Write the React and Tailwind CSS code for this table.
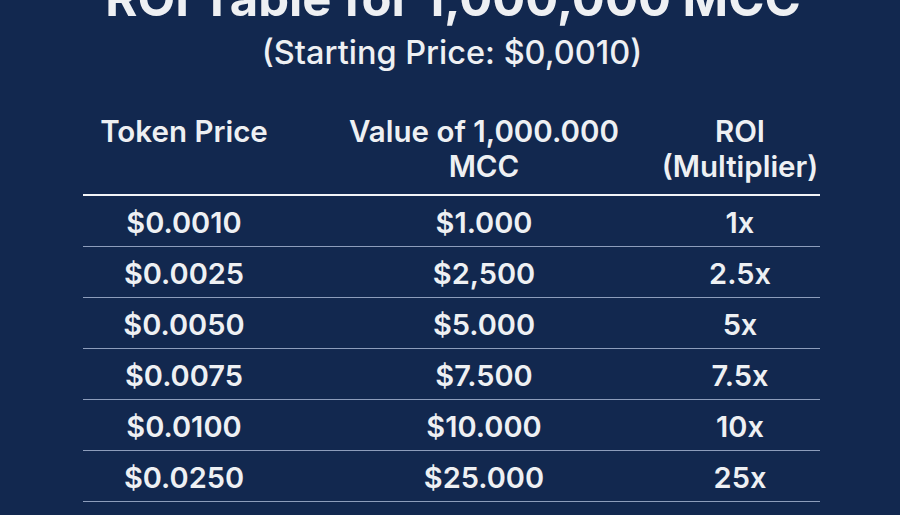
const rows = [
  ["$0.0010", "$1.000", "1x"],
  ["$0.0025", "$2,500", "2.5x"],
  ["$0.0050", "$5.000", "5x"],
  ["$0.0075", "$7.500", "7.5x"],
  ["$0.0100", "$10.000", "10x"],
  ["$0.0250", "$25.000", "25x"],
  ["$0.0500", "$50.000", "50x"],
  ["$0.1000", "$100.000", "100x"],
];

export default function App() {
  return (
    <div
      className="w-[900px] h-[515px] overflow-hidden bg-[#12284f] text-[#eef0f3]"
      style={{ fontFamily: "Inter, 'Noto Sans', sans-serif" }}
    >
      {/* heading */}
      <h1 className="mt-[-26px] pl-[6px] text-center text-[49px] leading-[50px] font-bold">
        ROI Table for 1,000,000 MCC
      </h1>
      <p className="mt-[11px] pl-[4px] text-center text-[32.5px] leading-[36px] font-medium">
        (Starting Price: $0,0010)
      </p>

      {/* table */}
      <div className="ml-[83px] w-[737px] mt-[43px]">
        <div className="grid grid-cols-[202px_375px_160px] pb-[10px] border-b-2 border-[#f2f4f7] text-[29.5px] leading-[35px] font-semibold">
          <div className="text-center whitespace-nowrap">Token Price</div>
          <div className="text-center pl-[23px]">
            Value of 1,000.000
            <br />
            MCC
          </div>
          <div className="text-center">
            ROI
            <br />
            (Multiplier)
          </div>
        </div>

        {rows.map((r) => (
          <div
            key={r[0]}
            className="grid grid-cols-[202px_375px_160px] items-center h-[51px] pt-[3px] border-b border-[#8d9dbb] text-[29px] font-semibold"
          >
            <div className="text-center">{r[0]}</div>
            <div className="text-center pl-[23px]">{r[1]}</div>
            <div className="text-center">{r[2]}</div>
          </div>
        ))}
      </div>
    </div>
  );
}
